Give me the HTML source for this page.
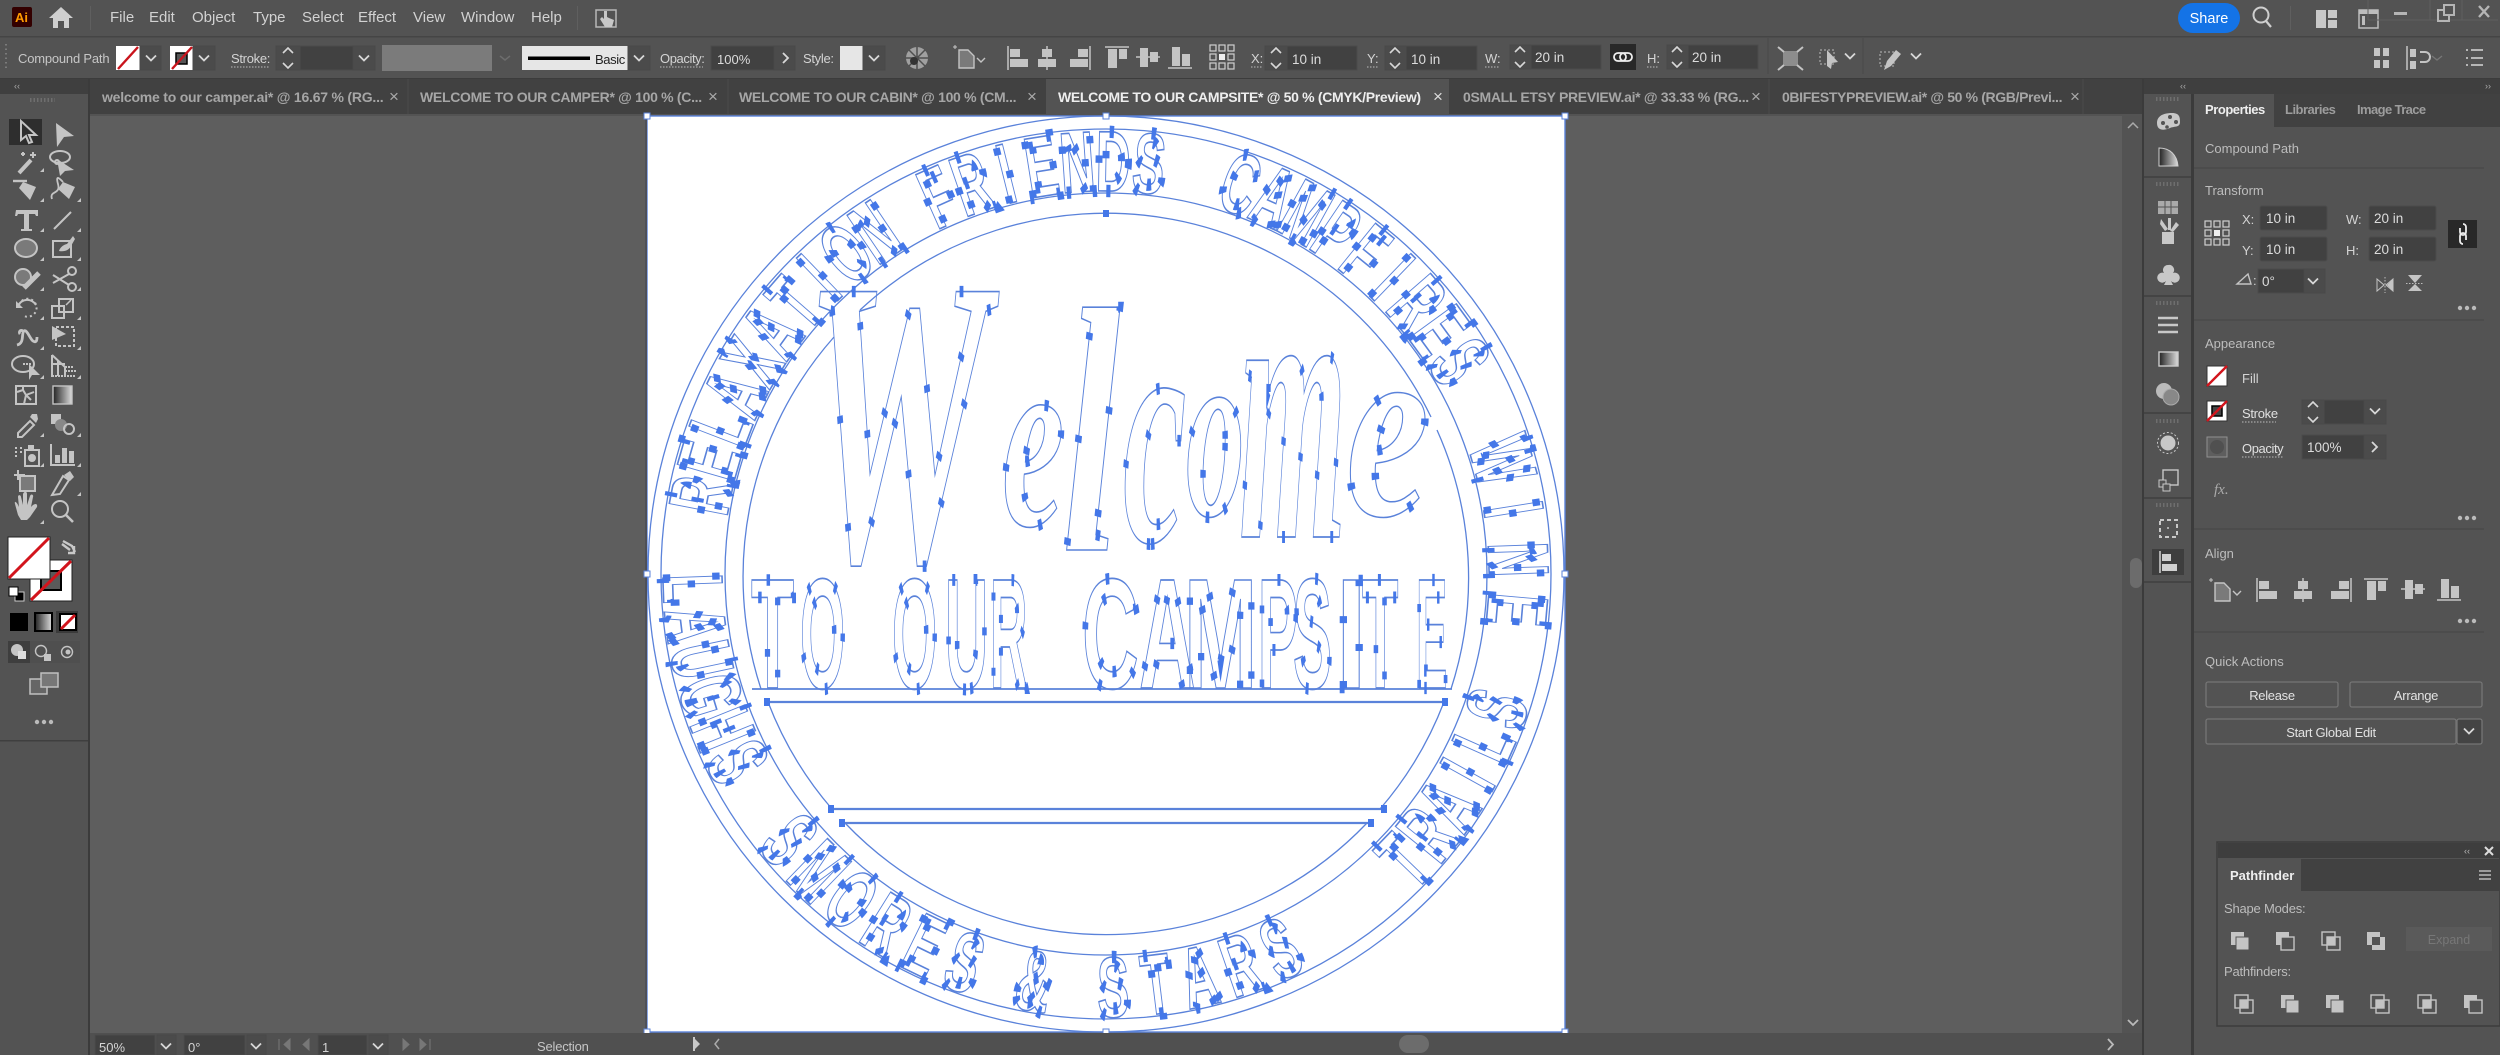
<!DOCTYPE html>
<html lang="en"><head><meta charset="utf-8"><title>Welcome to our campsite</title>
<style>
html,body{margin:0;padding:0;background:#535353;width:2500px;height:1055px;overflow:hidden}
svg{display:block;font-family:"Liberation Sans",sans-serif}
.m{font-size:15px;fill:#d2d2d2}
.t{font-size:13px;fill:#d4d4d4}
.tb{font-size:14px;font-weight:bold;fill:#a6a6a6}
.v{font-size:13.5px;fill:#dcdcdc}
.h{font-size:13px;fill:#bdbdbd}
.f{fill:#414141;stroke:#4b4b4b}
.s{fill:#4b4b4b;stroke:#484848}
.c{fill:none;stroke:#d0d0d0;stroke-width:1.6}
.ic{fill:#c4c4c4}
.il{fill:none;stroke:#c4c4c4;stroke-width:2}
.ln{fill:none;stroke:#5a82da;stroke-width:1.3}
.lt text{font-size:86px;font-weight:bold;text-anchor:middle;vector-effect:non-scaling-stroke}
.pt{fill:none;stroke:#4477e8;stroke-width:10;stroke-dasharray:6 34}
.art.pt{stroke-width:9;stroke-dasharray:6 80}
.art.pt g{stroke-dasharray:6 50}
.o{fill:none;stroke:#5a82da;stroke-width:1.3}
.art text{vector-effect:non-scaling-stroke;font-weight:bold}
.art .b{font-family:"Liberation Serif",serif;font-style:italic}
.hd{fill:#fff;stroke:#5a82da;stroke-width:1}
.x{font-size:17px;fill:#aaa}
</style></head><body>
<svg width="2500" height="1055" viewBox="0 0 2500 1055" xmlns="http://www.w3.org/2000/svg">
<defs>
<linearGradient id="gr" x1="0" x2="1" y1="0" y2="0"><stop offset="0" stop-color="#222"/><stop offset="1" stop-color="#ddd"/></linearGradient>
<g id="tri"><path d="M4 0L4 -4L0 0Z" fill="#c4c4c4"/></g>
<g id="al1"><path d="M1 0v24" stroke="#c4c4c4" stroke-width="1.5"/><rect class="ic" x="3" y="3" width="10" height="8"/><rect class="ic" x="3" y="13" width="18" height="8"/></g>
<g id="al2"><path d="M11 0v24" stroke="#c4c4c4" stroke-width="1.5"/><rect class="ic" x="6" y="3" width="10" height="8"/><rect class="ic" x="2" y="13" width="18" height="8"/></g>
<g id="al3"><path d="M21 0v24" stroke="#c4c4c4" stroke-width="1.5"/><rect class="ic" x="9" y="3" width="10" height="8"/><rect class="ic" x="1" y="13" width="18" height="8"/></g>
<g id="al4"><path d="M0 1h24" stroke="#c4c4c4" stroke-width="1.5"/><rect class="ic" x="3" y="3" width="9" height="19"/><rect class="ic" x="14" y="3" width="8" height="10"/></g>
<g id="al5"><path d="M0 11h24" stroke="#c4c4c4" stroke-width="1.5"/><rect class="ic" x="4" y="2" width="8" height="19"/><rect class="ic" x="14" y="6" width="8" height="10"/></g>
<g id="al6"><path d="M0 22h24" stroke="#c4c4c4" stroke-width="1.5"/><rect class="ic" x="4" y="1" width="8" height="19"/><rect class="ic" x="14" y="8" width="8" height="12"/></g>
<g id="docic"><path d="M6 5h9l6 6v12H6z" fill="#7a7a7a" stroke="#c4c4c4" stroke-width="1.4"/><path d="M0 2h4M2 0v4" stroke="#c4c4c4"/><path d="M24 13l4 4 4-4" fill="none" stroke="#c4c4c4" stroke-width="1.4"/></g>
<g id="refp"><g fill="none" stroke="#cfcfcf" stroke-width="1.2"><rect x="0" y="0" width="6" height="6"/><rect x="9" y="0" width="6" height="6"/><rect x="18" y="0" width="6" height="6"/><rect x="0" y="9" width="6" height="6"/><rect x="18" y="9" width="6" height="6"/><rect x="0" y="18" width="6" height="6"/><rect x="9" y="18" width="6" height="6"/><rect x="18" y="18" width="6" height="6"/></g><rect x="9" y="9" width="6" height="6" fill="#eee"/></g>
<path id="chev" d="M-5 -2.500L0 2.500L5 -2.500" fill="none" stroke="#d8d8d8" stroke-width="1.8"/>
<g id="spin"><path d="M-5 -5L0 -10L5 -5M-5 5L0 10L5 5" fill="none" stroke="#d8d8d8" stroke-width="1.6"/></g>
<g id="dots"><circle cx="2" cy="0" r="2.200" fill="#bbb"/><circle cx="9" cy="0" r="2.200" fill="#bbb"/><circle cx="16" cy="0" r="2.200" fill="#bbb"/></g>
<g id="swn"><rect width="20" height="20" fill="#fff" stroke="#333"/><path d="M0 20L20 0" stroke="#d2141c" stroke-width="2.400"/></g>
<g id="swnk"><rect width="20" height="20" fill="#fff" stroke="#333"/><rect x="5" y="5" width="10" height="10" fill="#444" stroke="#000" stroke-width="1.500"/><path d="M0 20L20 0" stroke="#d2141c" stroke-width="2.400"/></g>
<g id="pf1"><rect class="ic" x="0" y="0" width="13" height="13"/><rect class="ic" x="5" y="5" width="13" height="13" stroke="#535353"/></g>
<g id="pf2"><rect class="ic" x="0" y="0" width="13" height="13"/><rect x="5" y="5" width="13" height="13" fill="#535353" stroke="#c4c4c4" stroke-width="1.400"/></g>
<g id="pf3"><rect x="0" y="0" width="13" height="13" fill="none" stroke="#c4c4c4" stroke-width="1.400"/><rect x="5" y="5" width="13" height="13" fill="none" stroke="#c4c4c4" stroke-width="1.400"/><rect class="ic" x="5" y="5" width="8" height="8"/></g>
<g id="pf4"><rect class="ic" x="0" y="0" width="13" height="13"/><rect class="ic" x="5" y="5" width="13" height="13"/><rect x="5" y="5" width="8" height="8" fill="#535353"/></g>
</defs>

<!-- base -->
<rect width="2500" height="1055" fill="#535353"/>
<rect x="0" y="36" width="2500" height="1.500" fill="#454545"/>
<rect x="0" y="78" width="2500" height="1.500" fill="#3c3c3c"/>
<rect x="90" y="114" width="2032" height="919" fill="#5e5e5e"/>
<rect x="90" y="79" width="2053" height="35" fill="#414141"/>
<rect x="0" y="79" width="88" height="15" fill="#3f3f3f"/>
<rect x="2143" y="79" width="357" height="15" fill="#3f3f3f"/>
<rect x="88" y="79" width="2" height="976" fill="#3b3b3b"/>
<rect x="2142" y="79" width="2" height="976" fill="#3b3b3b"/>
<rect x="2191" y="94" width="3" height="961" fill="#3b3b3b"/>
<rect x="2194" y="94" width="306" height="33" fill="#414141"/>
<rect x="2194" y="94" width="80" height="33" fill="#535353"/>
<rect x="0" y="740" width="88" height="1.500" fill="#3f3f3f"/>

<!-- menu bar -->
<rect x="12" y="7" width="20" height="20" rx="2" fill="#330000"/>
<text x="15" y="22" style="font-size:13px;font-weight:bold;fill:#ff9a00">Ai</text>
<path d="M61 7L49 18h4v10h5v-7h6v7h5V18h4z" fill="#cfcfcf"/>
<rect x="90" y="6" width="1" height="24" fill="#5f5f5f"/>
<text class="m" x="110" y="22">File</text><text class="m" x="149" y="22">Edit</text><text class="m" x="192" y="22">Object</text><text class="m" x="253" y="22">Type</text><text class="m" x="302" y="22">Select</text><text class="m" x="358" y="22">Effect</text><text class="m" x="413" y="22">View</text><text class="m" x="461" y="22">Window</text><text class="m" x="531" y="22">Help</text>
<rect x="577" y="6" width="1" height="24" fill="#5f5f5f"/>
<rect x="596" y="10" width="20" height="17" fill="none" stroke="#b8b8b8" stroke-width="1.500"/>
<path d="M604 11v8l-2-2-2 2 5 8h7l2-7-5-2-2-1v-6z" fill="#c8c8c8"/>
<rect x="2178" y="3" width="62" height="30" rx="15" fill="#1473e6"/>
<text x="2209" y="23" text-anchor="middle" style="font-size:14.500px;fill:#fff">Share</text>
<circle cx="2261" cy="15" r="7.500" fill="none" stroke="#cfcfcf" stroke-width="2"/><path d="M2266 21l5 6" stroke="#cfcfcf" stroke-width="2.200"/>
<rect x="2290" y="6" width="1" height="24" fill="#5f5f5f"/>
<path d="M2316 10h10v18h-10zM2328 10h9v8h-9zM2328 20h9v8h-9z" fill="#c8c8c8"/>
<rect x="2359" y="10" width="19" height="18" fill="none" stroke="#bdbdbd" stroke-width="1.500"/><rect x="2359" y="10" width="19" height="4" fill="#bdbdbd"/><rect x="2362" y="16" width="3" height="9" fill="#bdbdbd"/>
<path d="M2368 0v20M2430 0v20M2462 0v20M2368 20h130" stroke="#5f5f5f" fill="none"/>
<rect x="2394" y="12" width="13" height="3" fill="#b5b5b5"/>
<rect x="2438" y="10" width="11" height="11" fill="none" stroke="#b5b5b5" stroke-width="2"/><rect x="2444" y="5" width="10" height="10" fill="#535353" stroke="#b5b5b5" stroke-width="2"/>
<path d="M2479 6l10 11M2489 6l-10 11" stroke="#b5b5b5" stroke-width="2.400"/>

<!-- control bar -->
<path d="M6 44v26" stroke="#7b7b7b" stroke-dasharray="1.500 3" stroke-width="2"/>
<text class="t" x="18" y="63" style="letter-spacing:-.2px;fill:#c6c6c6">Compound Path</text>
<rect x="116" y="46" width="24" height="24" fill="#fff"/><path d="M118 69L138 47" stroke="#c9141c" stroke-width="2.400"/>
<rect x="140" y="46" width="21" height="24" class="s"/><use href="#chev" x="151" y="58"/>
<rect x="170" y="46" width="23" height="24" fill="#fff"/><rect x="176" y="53" width="11" height="11" fill="#555" stroke="#000" stroke-width="1.500"/><path d="M172 69L192 47" stroke="#c9141c" stroke-width="2.400"/>
<rect x="193" y="46" width="22" height="24" class="s"/><use href="#chev" x="204" y="58"/>
<text class="t" x="231" y="63" style="letter-spacing:-.3px">Stroke:</text><path d="M231 67h38" stroke="#bbb" stroke-dasharray="1.500 1.500"/>
<rect x="276" y="46" width="24" height="24" class="s"/><use href="#spin" x="288" y="58"/>
<rect x="300" y="46" width="53" height="24" class="f"/>
<rect x="353" y="46" width="22" height="24" class="s"/><use href="#chev" x="364" y="58"/>
<rect x="382" y="45" width="110" height="26" fill="#7b7b7b"/>
<path d="M500 56l5 4 5-4" fill="none" stroke="#6d6d6d" stroke-width="1.500"/>
<rect x="522" y="46" width="106" height="24" fill="#e6e6e6"/><rect x="528" y="56.500" width="62" height="3.500" fill="#000"/>
<text x="595" y="64" style="font-size:13px;fill:#222;letter-spacing:-.4px">Basic</text>
<rect x="628" y="46" width="22" height="24" class="s"/><use href="#chev" x="639" y="58"/>
<text class="t" x="660" y="63" style="letter-spacing:-.4px">Opacity:</text><path d="M660 67h43" stroke="#bbb" stroke-dasharray="1.500 1.500"/>
<rect x="711" y="46" width="63" height="24" class="f"/><text class="v" x="717" y="64" style="font-size:13px">100%</text>
<rect x="774" y="46" width="21" height="24" class="s"/><path d="M783 53l5 5-5 5" fill="none" stroke="#d8d8d8" stroke-width="1.800"/>
<text class="t" x="803" y="63" style="letter-spacing:-.3px">Style:</text>
<rect x="840" y="46" width="23" height="24" fill="#e6e6e6"/>
<rect x="863" y="46" width="22" height="24" class="s"/><use href="#chev" x="874" y="58"/>
<circle cx="917" cy="58" r="11" fill="#a0a0a0"/><path d="M917 47v22M906 58h22M909 50l16 16M925 50l-16 16" stroke="#4f4f4f" stroke-width="1.500"/><circle cx="914" cy="61" r="4" fill="#333"/>
<use href="#docic" x="953" y="45"/>
<use href="#al1" x="1007" y="46"/><use href="#al2" x="1036" y="46"/><use href="#al3" x="1069" y="46"/><use href="#al4" x="1105" y="46"/><use href="#al5" x="1136" y="46"/><use href="#al6" x="1168" y="46"/>
<use href="#refp" x="1210" y="45"/>
<text class="t" x="1251" y="63">X:</text><path d="M1251 67h12" stroke="#bbb" stroke-dasharray="1.500 1.500"/>
<rect x="1265" y="46" width="22" height="24" class="s"/><use href="#spin" x="1276" y="58"/><rect x="1287" y="46" width="70" height="24" class="f"/><text class="v" x="1292" y="64">10 in</text>
<text class="t" x="1367" y="63">Y:</text><path d="M1367 67h12" stroke="#bbb" stroke-dasharray="1.500 1.500"/>
<rect x="1385" y="46" width="21" height="24" class="s"/><use href="#spin" x="1395" y="58"/><rect x="1406" y="46" width="71" height="24" class="f"/><text class="v" x="1411" y="64">10 in</text>
<text class="t" x="1485" y="63">W:</text><path d="M1485 67h15" stroke="#bbb" stroke-dasharray="1.500 1.500"/>
<rect x="1510" y="45" width="21" height="24" class="s"/><use href="#spin" x="1520" y="57"/><rect x="1531" y="45" width="70" height="24" class="f"/><text class="v" x="1535" y="62">20 in</text>
<rect x="1610" y="44" width="26" height="26" fill="#282828"/><path d="M1618 53h4a4 4 0 0 1 0 8h-4a4 4 0 0 1 0-8zM1624 53h4a4 4 0 0 1 0 8h-4a4 4 0 0 1 0-8z" fill="none" stroke="#eee" stroke-width="1.800"/>
<text class="t" x="1647" y="63">H:</text><path d="M1647 67h12" stroke="#bbb" stroke-dasharray="1.500 1.500"/>
<rect x="1667" y="45" width="21" height="24" class="s"/><use href="#spin" x="1677" y="57"/><rect x="1688" y="45" width="70" height="24" class="f"/><text class="v" x="1692" y="62">20 in</text>
<path d="M1768 38v36M1863 38v36" stroke="#4a4a4a"/>
<rect x="1783" y="51" width="15" height="15" fill="#8d8d8d"/><path d="M1778 47l6 5M1803 47l-6 5M1778 70l6-5M1803 70l-6-5" stroke="#c4c4c4" stroke-width="2"/>
<rect x="1820" y="50" width="14" height="14" fill="none" stroke="#bbb" stroke-dasharray="2 2"/><path d="M1827 50l11 12-6 1-1 6-4-3z" fill="#c4c4c4"/><use href="#chev" x="1850" y="56"/>
<rect x="1880" y="52" width="14" height="14" fill="none" stroke="#bbb" stroke-dasharray="2 2"/><path d="M1884 70l3-9 9-11 5 4-10 12z" fill="#c4c4c4"/><use href="#chev" x="1916" y="56"/>
<path d="M2374 48h6v8h-6zM2383 48h6v8h-6zM2374 60h6v8h-6zM2383 60h6v8h-6z" fill="#c4c4c4"/>
<path d="M2407 46v24" stroke="#c4c4c4" stroke-width="1.500"/><path d="M2410 49h6v8h-6zM2410 61h6v8h-6z" fill="#c4c4c4"/><path d="M2420 52h5a5 5 0 0 1 0 10h-5" fill="none" stroke="#c4c4c4" stroke-width="2"/>
<path d="M2432 56l5 4 5-4" fill="none" stroke="#767676" stroke-width="1.400"/>
<path d="M2466 50h2M2471 50h12M2466 58h2M2471 58h12M2466 65h2M2471 65h12" stroke="#c4c4c4" stroke-width="1.800" fill="none"/>

<!-- tabs -->
<path d="M408 79v35M728 79v35M1769 79v35M2083 79v35" stroke="#4a4a4a"/>
<rect x="1046" y="79" width="403" height="35" fill="#535353"/>
<rect x="90" y="114" width="2032" height="2" fill="#535353"/>
<text x="14" y="89" style="font-size:9px;fill:#aaa">‹‹</text>
<text class="tb" x="102" y="102" style="letter-spacing:-.22px">welcome to our camper.ai* @ 16.67 % (RG...</text><text class="x" x="389" y="102">×</text>
<text class="tb" x="420" y="102" style="letter-spacing:-.3px">WELCOME TO OUR CAMPER* @ 100 % (C...</text><text class="x" x="708" y="102">×</text>
<text class="tb" x="739" y="102" style="letter-spacing:-.3px">WELCOME TO OUR CABIN* @ 100 % (CM...</text><text class="x" x="1027" y="102">×</text>
<text class="tb" x="1058" y="102" style="fill:#eee;letter-spacing:-.32px">WELCOME TO OUR CAMPSITE* @ 50 % (CMYK/Preview)</text><text class="x" x="1433" y="102" style="fill:#ddd">×</text>
<text class="tb" x="1463" y="102" style="letter-spacing:-.32px">0SMALL ETSY PREVIEW.ai* @ 33.33 % (RG...</text><text class="x" x="1751" y="102">×</text>
<text class="tb" x="1782" y="102" style="letter-spacing:-.36px">0BIFESTYPREVIEW.ai* @ 50 % (RGB/Previ...</text><text class="x" x="2070" y="102">×</text>

<!-- artboard + artwork -->
<rect x="647" y="116" width="918" height="916" fill="#fff" stroke="#5a82da" stroke-width="1.400"/>
<rect x="645" y="116" width="2" height="916" fill="#4e5058"/>
<circle class="o" cx="1106" cy="574" r="458"/>
<circle class="o" cx="1106" cy="574" r="445"/>
<circle class="o" cx="1106" cy="574" r="381"/>
<g class="o">
<path d="M761 689A361 361 0 0 1 834 337"/><path d="M860 310A361 361 0 0 1 1431 417"/><path d="M1437 430A361 361 0 0 1 1451 689"/>
<path d="M768 702A361 361 0 0 0 832 809"/><path d="M1444 702A361 361 0 0 1 1380 809"/><path d="M845 823A361 361 0 0 0 1367 823"/>
<path d="M752 689H1452" stroke-width="1.800"/><path d="M767 702H1445" stroke-width="2.200"/><path d="M831 809H1383" stroke-width="2.200"/><path d="M842 823H1371" stroke-width="2.200"/>
</g>
<path d="M1103 210h6v7h-6zM764 698h6v8h-6zM1442 698h6v8h-6zM828 805h6v8h-6zM1381 805h6v8h-6zM839 819h6v8h-6zM1368 819h6v8h-6z" fill="#4477e8"/>

<!-- ring lettering: outline pass -->
<g transform="translate(1106 574)" class="lt ln">
<text transform="rotate(-79)translate(0,-383)scale(.56,1)">R</text><text transform="rotate(-74)translate(0,-383)scale(.56,1)">E</text><text transform="rotate(-69)translate(0,-383)scale(.56,1)">L</text><text transform="rotate(-64)translate(0,-383)scale(.56,1)">A</text><text transform="rotate(-59)translate(0,-383)scale(.56,1)">X</text><text transform="rotate(-54)translate(0,-383)scale(.56,1)">A</text><text transform="rotate(-49)translate(0,-383)scale(.56,1)">T</text><text transform="rotate(-44)translate(0,-383)scale(.56,1)">I</text><text transform="rotate(-39)translate(0,-383)scale(.56,1)">O</text><text transform="rotate(-34)translate(0,-383)scale(.56,1)">N</text>
<text transform="rotate(-24)translate(0,-383)scale(.56,1)">F</text><text transform="rotate(-19)translate(0,-383)scale(.56,1)">R</text><text transform="rotate(-14)translate(0,-383)scale(.56,1)">I</text><text transform="rotate(-9)translate(0,-383)scale(.56,1)">E</text><text transform="rotate(-4)translate(0,-383)scale(.56,1)">N</text><text transform="rotate(1)translate(0,-383)scale(.56,1)">D</text><text transform="rotate(6)translate(0,-383)scale(.56,1)">S</text>
<text transform="rotate(19)translate(0,-383)scale(.56,1)">C</text><text transform="rotate(24)translate(0,-383)scale(.56,1)">A</text><text transform="rotate(29)translate(0,-383)scale(.56,1)">M</text><text transform="rotate(34)translate(0,-383)scale(.56,1)">P</text><text transform="rotate(39)translate(0,-383)scale(.56,1)">F</text><text transform="rotate(44)translate(0,-383)scale(.56,1)">I</text><text transform="rotate(49)translate(0,-383)scale(.56,1)">R</text><text transform="rotate(54)translate(0,-383)scale(.56,1)">E</text><text transform="rotate(59)translate(0,-383)scale(.56,1)">S</text>
<text transform="rotate(74)translate(0,-383)scale(.56,1)">W</text><text transform="rotate(81)translate(0,-383)scale(.56,1)">I</text><text transform="rotate(88)translate(0,-383)scale(.56,1)">N</text><text transform="rotate(95)translate(0,-383)scale(.56,1)">E</text>
<text transform="rotate(88)translate(0,443)scale(.56,1)">L</text><text transform="rotate(83)translate(0,443)scale(.56,1)">A</text><text transform="rotate(78)translate(0,443)scale(.56,1)">U</text><text transform="rotate(73)translate(0,443)scale(.56,1)">G</text><text transform="rotate(68)translate(0,443)scale(.56,1)">H</text><text transform="rotate(63)translate(0,443)scale(.56,1)">S</text>
<text transform="rotate(50)translate(0,443)scale(.56,1)">S</text><text transform="rotate(44)translate(0,443)scale(.56,1)">M</text><text transform="rotate(38)translate(0,443)scale(.56,1)">O</text><text transform="rotate(32)translate(0,443)scale(.56,1)">R</text><text transform="rotate(26)translate(0,443)scale(.56,1)">E</text><text transform="rotate(20)translate(0,443)scale(.56,1)">S</text>
<text transform="rotate(10)translate(0,443)scale(.56,1)">&amp;</text>
<text transform="rotate(-1)translate(0,443)scale(.56,1)">S</text><text transform="rotate(-7)translate(0,443)scale(.56,1)">T</text><text transform="rotate(-13)translate(0,443)scale(.56,1)">A</text><text transform="rotate(-19)translate(0,443)scale(.56,1)">R</text><text transform="rotate(-25)translate(0,443)scale(.56,1)">S</text>
<text transform="rotate(-46)translate(0,443)scale(.56,1)">T</text><text transform="rotate(-51)translate(0,443)scale(.56,1)">R</text><text transform="rotate(-56)translate(0,443)scale(.56,1)">A</text><text transform="rotate(-61)translate(0,443)scale(.56,1)">I</text><text transform="rotate(-66)translate(0,443)scale(.56,1)">L</text><text transform="rotate(-71)translate(0,443)scale(.56,1)">S</text>
</g>
<!-- ring lettering: anchor point pass -->
<g transform="translate(1106 574)" class="lt pt" aria-hidden="true">
<text transform="rotate(-79)translate(0,-383)scale(.56,1)">R</text><text transform="rotate(-74)translate(0,-383)scale(.56,1)">E</text><text transform="rotate(-69)translate(0,-383)scale(.56,1)">L</text><text transform="rotate(-64)translate(0,-383)scale(.56,1)">A</text><text transform="rotate(-59)translate(0,-383)scale(.56,1)">X</text><text transform="rotate(-54)translate(0,-383)scale(.56,1)">A</text><text transform="rotate(-49)translate(0,-383)scale(.56,1)">T</text><text transform="rotate(-44)translate(0,-383)scale(.56,1)">I</text><text transform="rotate(-39)translate(0,-383)scale(.56,1)">O</text><text transform="rotate(-34)translate(0,-383)scale(.56,1)">N</text>
<text transform="rotate(-24)translate(0,-383)scale(.56,1)">F</text><text transform="rotate(-19)translate(0,-383)scale(.56,1)">R</text><text transform="rotate(-14)translate(0,-383)scale(.56,1)">I</text><text transform="rotate(-9)translate(0,-383)scale(.56,1)">E</text><text transform="rotate(-4)translate(0,-383)scale(.56,1)">N</text><text transform="rotate(1)translate(0,-383)scale(.56,1)">D</text><text transform="rotate(6)translate(0,-383)scale(.56,1)">S</text>
<text transform="rotate(19)translate(0,-383)scale(.56,1)">C</text><text transform="rotate(24)translate(0,-383)scale(.56,1)">A</text><text transform="rotate(29)translate(0,-383)scale(.56,1)">M</text><text transform="rotate(34)translate(0,-383)scale(.56,1)">P</text><text transform="rotate(39)translate(0,-383)scale(.56,1)">F</text><text transform="rotate(44)translate(0,-383)scale(.56,1)">I</text><text transform="rotate(49)translate(0,-383)scale(.56,1)">R</text><text transform="rotate(54)translate(0,-383)scale(.56,1)">E</text><text transform="rotate(59)translate(0,-383)scale(.56,1)">S</text>
<text transform="rotate(74)translate(0,-383)scale(.56,1)">W</text><text transform="rotate(81)translate(0,-383)scale(.56,1)">I</text><text transform="rotate(88)translate(0,-383)scale(.56,1)">N</text><text transform="rotate(95)translate(0,-383)scale(.56,1)">E</text>
<text transform="rotate(88)translate(0,443)scale(.56,1)">L</text><text transform="rotate(83)translate(0,443)scale(.56,1)">A</text><text transform="rotate(78)translate(0,443)scale(.56,1)">U</text><text transform="rotate(73)translate(0,443)scale(.56,1)">G</text><text transform="rotate(68)translate(0,443)scale(.56,1)">H</text><text transform="rotate(63)translate(0,443)scale(.56,1)">S</text>
<text transform="rotate(50)translate(0,443)scale(.56,1)">S</text><text transform="rotate(44)translate(0,443)scale(.56,1)">M</text><text transform="rotate(38)translate(0,443)scale(.56,1)">O</text><text transform="rotate(32)translate(0,443)scale(.56,1)">R</text><text transform="rotate(26)translate(0,443)scale(.56,1)">E</text><text transform="rotate(20)translate(0,443)scale(.56,1)">S</text>
<text transform="rotate(10)translate(0,443)scale(.56,1)">&amp;</text>
<text transform="rotate(-1)translate(0,443)scale(.56,1)">S</text><text transform="rotate(-7)translate(0,443)scale(.56,1)">T</text><text transform="rotate(-13)translate(0,443)scale(.56,1)">A</text><text transform="rotate(-19)translate(0,443)scale(.56,1)">R</text><text transform="rotate(-25)translate(0,443)scale(.56,1)">S</text>
<text transform="rotate(-46)translate(0,443)scale(.56,1)">T</text><text transform="rotate(-51)translate(0,443)scale(.56,1)">R</text><text transform="rotate(-56)translate(0,443)scale(.56,1)">A</text><text transform="rotate(-61)translate(0,443)scale(.56,1)">I</text><text transform="rotate(-66)translate(0,443)scale(.56,1)">L</text><text transform="rotate(-71)translate(0,443)scale(.56,1)">S</text>
</g>

<!-- Welcome / TO OUR CAMPSITE outlines -->
<g class="art ln">
<text class="b" transform="translate(805 560)scale(.5,1)" font-size="410">W</text>
<text class="b" transform="translate(1002 525)scale(.55,1)" font-size="255">e</text>
<text class="b" transform="translate(1062 550)scale(.6,1)" font-size="350">l</text>
<text class="b" transform="translate(1123 541)scale(.44,1)" font-size="325">c</text>
<text class="b" transform="translate(1186 515)scale(.47,1)" font-size="250">o</text>
<text class="b" transform="translate(1239 537)scale(.36,1)" font-size="385">m</text>
<text class="b" transform="translate(1346 515)scale(.72,1)" font-size="260">e</text>
<g font-size="157">
<text transform="translate(751 688)scale(.45,1)">T</text><text transform="translate(800 688)scale(.37,1)">O</text>
<text transform="translate(892 688)scale(.37,1)">O</text><text transform="translate(945 688)scale(.38,1)">U</text><text transform="translate(990 688)scale(.33,1)">R</text>
<text transform="translate(1082 688)scale(.5,1)">C</text><text transform="translate(1139 688)scale(.5,1)">A</text><text transform="translate(1184 688)scale(.56,1)">M</text><text transform="translate(1258 688)scale(.38,1)">P</text><text transform="translate(1293 688)scale(.37,1)">S</text><text transform="translate(1336 688)scale(.7,1)">I</text><text transform="translate(1362 688)scale(.38,1)">T</text><text transform="translate(1416 688)scale(.3,1)">E</text>
</g>
</g>
<g class="art pt" aria-hidden="true">
<text class="b" transform="translate(805 560)scale(.5,1)" font-size="410">W</text>
<text class="b" transform="translate(1002 525)scale(.55,1)" font-size="255">e</text>
<text class="b" transform="translate(1062 550)scale(.6,1)" font-size="350">l</text>
<text class="b" transform="translate(1123 541)scale(.44,1)" font-size="325">c</text>
<text class="b" transform="translate(1186 515)scale(.47,1)" font-size="250">o</text>
<text class="b" transform="translate(1239 537)scale(.36,1)" font-size="385">m</text>
<text class="b" transform="translate(1346 515)scale(.72,1)" font-size="260">e</text>
<g font-size="157">
<text transform="translate(751 688)scale(.45,1)">T</text><text transform="translate(800 688)scale(.37,1)">O</text>
<text transform="translate(892 688)scale(.37,1)">O</text><text transform="translate(945 688)scale(.38,1)">U</text><text transform="translate(990 688)scale(.33,1)">R</text>
<text transform="translate(1082 688)scale(.5,1)">C</text><text transform="translate(1139 688)scale(.5,1)">A</text><text transform="translate(1184 688)scale(.56,1)">M</text><text transform="translate(1258 688)scale(.38,1)">P</text><text transform="translate(1293 688)scale(.37,1)">S</text><text transform="translate(1336 688)scale(.7,1)">I</text><text transform="translate(1362 688)scale(.38,1)">T</text><text transform="translate(1416 688)scale(.3,1)">E</text>
</g>
</g>
<g class="hd"><rect x="644" y="113" width="6" height="6"/><rect x="1103" y="113" width="6" height="6"/><rect x="1562" y="113" width="6" height="6"/><rect x="644" y="571" width="6" height="6"/><rect x="1562" y="571" width="6" height="6"/><rect x="644" y="1029" width="6" height="6"/><rect x="1103" y="1029" width="6" height="6"/><rect x="1562" y="1029" width="6" height="6"/></g>

<!-- vertical scrollbar -->
<rect x="2122" y="114" width="20" height="919" fill="#535353"/>
<path d="M2128 128l5-5 5 5" fill="none" stroke="#aaa" stroke-width="1.500"/>
<rect x="2130" y="558" width="12" height="30" rx="6" fill="#6c6c6c"/>
<path d="M2128 1020l5 5 5-5" fill="none" stroke="#bbb" stroke-width="1.800"/>

<!-- status bar -->
<rect x="90" y="1033" width="2052" height="22" fill="#505050"/>
<rect x="95" y="1035" width="60" height="20" class="f"/><text class="t" x="99" y="1052">50%</text><rect x="157" y="1035" width="19" height="20" class="s"/><use href="#chev" x="166" y="1046"/>
<rect x="184" y="1035" width="61" height="20" class="f"/><text class="t" x="188" y="1052">0°</text><rect x="247" y="1035" width="19" height="20" class="s"/><use href="#chev" x="256" y="1046"/>
<path d="M279 1039v11M290 1039l-6 5.500 6 5.500zM309 1039l-6 5.500 6 5.500z" fill="#777" stroke="#777"/>
<rect x="318" y="1035" width="49" height="20" class="f"/><text class="t" x="322" y="1052">1</text><rect x="369" y="1035" width="19" height="20" class="s"/><use href="#chev" x="378" y="1046"/>
<path d="M403 1039l6 5.500-6 5.500zM420 1039l6 5.500-6 5.500zM430 1039v11" fill="#777" stroke="#777"/>
<text class="t" x="537" y="1051" style="letter-spacing:-.2px;fill:#c6c6c6">Selection</text>
<path d="M693 1037l7 7-7 7z" fill="#c8c8c8"/><path d="M694 1037v14" stroke="#c8c8c8" stroke-width="2"/>
<path d="M719 1039l-4 5 4 5" fill="none" stroke="#aaa" stroke-width="1.500"/>
<rect x="1399" y="1035" width="30" height="18" rx="9" fill="#6c6c6c"/>
<path d="M2108 1039l5 5.500-5 5.500" fill="none" stroke="#bbb" stroke-width="1.800"/>

<!-- left toolbar -->
<path d="M30 100h25" stroke="#6e6e6e" stroke-dasharray="1.500 2" stroke-width="4"/>
<rect x="9" y="119" width="33" height="26" fill="#2e2e2e"/>
<g class="il">
<g transform="translate(27 133)"><path d="M-6-12V7L-1 3 2 10 5 9 2 2H9Z"/></g>
<g transform="translate(56 123)"><path d="M0 0L18 13 8 14 1 24Z" fill="#c4c4c4" stroke="none"/></g>
<g transform="translate(27 162)"><path d="M-8 11L4-2" stroke-width="4"/><path d="M6-10v6M3-7h6M-4-10v4M-6-8h4"/></g>
<g transform="translate(63 162)"><ellipse cx="-3" cy="-5" rx="10" ry="6"/><path d="M-6-3L11 8 2 9-3 14Z" fill="#c4c4c4" stroke="none"/><circle cx="-6" cy="0" r="2"/></g>
<g transform="translate(27 190)"><path d="M-14-9H0" stroke-width="2.400"/><path d="M-4-8L9-3 3 10-8-2Z" fill="#c4c4c4" stroke="none"/></g>
<g transform="translate(63 190)"><path d="M-11 9C-14 0-2 5-5-6S-2-10 0-8" stroke-width="1.800"/><path d="M0-8L12-3 6 9-5-1Z" fill="#c4c4c4" stroke="none"/></g>
<path d="M16 210h22v6h-2l-1-2h-6v15h3v2H21v-2h3V214h-6l-1 2h-2z" fill="#c4c4c4" stroke="none"/>
<path d="M54 229L71 212"/>
<ellipse cx="26" cy="248" rx="11" ry="9" fill="#7a7a7a"/>
<g transform="translate(63 248)"><path d="M-10-7H8V9H-10Z"/><path d="M-4 3C-2-3 4-4 4-4L10-12 12-9 8-2C6 2 2 4-4 3Z" fill="#c4c4c4" stroke="none"/></g>
<g transform="translate(27 280)"><circle cx="-4" cy="-3" r="8" fill="#7a7a7a"/><path d="M-3 8L12-7" stroke-width="5"/></g>
<g transform="translate(63 280)"><circle cx="9" cy="-9" r="4"/><circle cx="9" cy="7" r="4"/><path d="M-10-5L6 5M-10 3L6-6"/></g>
<g transform="translate(27 308)"><path d="M-8-3A9 9 0 1 1-3 8" stroke-dasharray="2 3"/><path d="M-9-2A10 10 0 0 1 9-3"/><path d="M-11-7V0H-4Z" fill="#c4c4c4" stroke="none"/></g>
<g transform="translate(63 308)"><rect x="-11" y="-2" width="12" height="12"/><rect x="-4" y="-9" width="14" height="13"/><path d="M3-3L8-8" stroke-width="1.500"/></g>
<g transform="translate(27 337)"><path d="M-10 8C-2 6-6-4-3-6S3 2 6 4 10 4 10 0M-4-6C-8-8-8-4-7-3" stroke-width="2.800"/></g>
<g transform="translate(63 337)"><path d="M-11-11L3-3-11 3Z" fill="#c4c4c4" stroke="none"/><rect x="-7" y="-10" width="18" height="19" stroke-dasharray="3 2"/></g>
<g transform="translate(27 367)"><ellipse cx="-4" cy="-3" rx="11" ry="8"/><path d="M-4-3h8" stroke-dasharray="2 1"/><path d="M2-3L13 8 5 8 2 13Z" fill="#c4c4c4" stroke="none"/></g>
<g transform="translate(63 367)"><path d="M-11-12V10M-11-12L2 0V8M-5-7V9M-11-3H2"/><path d="M2 0h8M2 4h12M-11 9H13" stroke-dasharray="2 1"/></g>
<g transform="translate(26 395)"><rect x="-10" y="-9" width="20" height="18"/><path d="M-9-3L-3-5 0 0 8-3M-3-5V-9M0 0L-2 9M0 0L5 5"/></g>
<rect x="53" y="386" width="19" height="18" fill="url(#gr)" stroke="#c4c4c4" stroke-width="1.400"/>
<g transform="translate(27 425)"><path d="M-9 8L3-4 7 0-5 12-9 12Z"/><path d="M3-8L9-2 11-6 10-11 5-11Z" fill="#c4c4c4" stroke="none"/></g>
<g transform="translate(63 425)"><rect x="-12" y="-11" width="10" height="10" fill="#c4c4c4" stroke="none"/><circle cx="-2" cy="0" r="6" fill="#888" stroke="none"/><circle cx="6" cy="4" r="5"/></g>
<g transform="translate(27 455)"><path d="M-12-7h2M-7-7h2M-12-3h2M-7-3h2M-12 1h2" stroke-width="2"/><rect x="-2" y="-5" width="14" height="16"/><rect x="1" y="-10" width="6" height="5" fill="#c4c4c4" stroke="none"/><circle cx="5" cy="3" r="3" fill="#c4c4c4"/></g>
<g transform="translate(63 455)"><path d="M-12-11V10H12"/><path d="M-8 0h5v8h-5zM-1-7h5V8H-1zM6-4h5V8H6z" fill="#c4c4c4" stroke="none"/></g>
<g transform="translate(27 483)"><path d="M-13-8H-2M-9-13V-3"/><rect x="-7" y="-7" width="15" height="15" fill="#7a7a7a"/></g>
<g transform="translate(63 483)"><path d="M-11 12L0-7 6-3-3 11Z"/><path d="M1-8L7-12 11-6 7-2Z" fill="#c4c4c4" stroke="none"/></g>
<path d="M18 515L15 504C14 500 17 502 19 507L18 497C18 494 21 495 21 497L23 505 23 494C24 491 27 491 27 494V505L30 496C31 493 34 495 33 497L31 507C34 503 38 503 37 507L30 517 27 520H21Z" fill="#c4c4c4" stroke="none"/>
<g transform="translate(61 510)"><circle cx="-1" cy="-1" r="8"/><path d="M5 5L12 12" stroke-width="2.600"/></g>
</g>
<g>
<use href="#tri" x="40" y="172"/><use href="#tri" x="40" y="202"/><use href="#tri" x="77" y="202"/><use href="#tri" x="40" y="232"/><use href="#tri" x="77" y="232"/><use href="#tri" x="40" y="261"/><use href="#tri" x="77" y="261"/><use href="#tri" x="40" y="291"/><use href="#tri" x="77" y="291"/><use href="#tri" x="40" y="320"/><use href="#tri" x="77" y="320"/><use href="#tri" x="40" y="350"/><use href="#tri" x="77" y="350"/><use href="#tri" x="40" y="379"/><use href="#tri" x="77" y="379"/><use href="#tri" x="40" y="437"/><use href="#tri" x="77" y="437"/><use href="#tri" x="40" y="467"/><use href="#tri" x="77" y="467"/><use href="#tri" x="77" y="496"/><use href="#tri" x="40" y="524"/>
</g>

<rect x="30" y="560" width="42" height="41" fill="#fff" stroke="#222"/>
<rect x="41" y="571" width="20" height="19" fill="#5a5a5a" stroke="#000" stroke-width="2"/>
<path d="M31 600L71 561" stroke="#d2141c" stroke-width="3"/>
<rect x="8" y="537" width="42" height="42" fill="#fff" stroke="#222"/>
<path d="M9 578L49 538" stroke="#d2141c" stroke-width="3"/>
<path d="M63 541L72 546 75 552M62 544L70 550M74 546V553H68" fill="none" stroke="#c8c8c8" stroke-width="2.400"/>
<rect x="15" y="592" width="9" height="9" fill="#000" stroke="#ccc"/><rect x="9" y="587" width="9" height="9" fill="#fff" stroke="#000"/>
<rect x="10" y="613" width="18" height="18" fill="#000"/>
<rect x="35" y="613" width="17" height="18" fill="url(#gr)" stroke="#000" stroke-width="2"/>
<rect x="56" y="611" width="22" height="22" fill="#3b3b3b"/>
<rect x="60" y="614" width="16" height="16" fill="#fff" stroke="#000" stroke-width="2"/><path d="M61 629L75 615" stroke="#d2141c" stroke-width="3"/>
<rect x="8" y="641" width="22" height="22" fill="#3e3e3e"/>
<rect x="30" y="641" width="50" height="22" fill="#4f4f4f"/>
<circle cx="17" cy="650" r="5.500" fill="#c4c4c4" stroke="#c4c4c4"/><rect x="18" y="651" width="8" height="8" fill="#ddd"/>
<circle cx="41" cy="651" r="5.500" fill="none" stroke="#c4c4c4" stroke-width="1.400"/><rect x="44" y="654" width="7" height="7" fill="#c4c4c4"/>
<circle cx="67" cy="652" r="5.500" fill="none" stroke="#c4c4c4" stroke-width="1.400"/><circle cx="68" cy="652" r="2.500" fill="#c4c4c4"/>
<rect x="30" y="679" width="17" height="15" fill="#666" stroke="#c0c0c0" stroke-width="1.500"/><rect x="41" y="673" width="17" height="14" fill="#777" stroke="#c0c0c0" stroke-width="1.500"/>
<use href="#dots" x="35" y="722"/>

<!-- right dock icon strip -->
<g fill="#777"><path d="M2156 99h24M2156 184h24M2156 303h24M2156 421h24M2156 505h24" stroke="#6e6e6e" stroke-width="4" stroke-dasharray="1.500 2" fill="none"/></g>
<path d="M2144 177h47M2144 296h47M2144 413h47M2144 498h47M2144 582h47" stroke="#3f3f3f" stroke-width="1.500"/>
<path d="M2157 123C2157 115 2165 113 2172 113 2180 113 2180 118 2180 122 2180 128 2174 126 2170 128 2166 130 2157 132 2157 123Z" fill="#c8c8c8"/><circle cx="2163" cy="123" r="2" fill="#535353"/><circle cx="2170" cy="117" r="2" fill="#535353"/><circle cx="2176" cy="122" r="2" fill="#535353"/><circle cx="2167" cy="127" r="1.800" fill="#535353"/>
<path d="M2159 148C2170 148 2177 155 2178 166H2159Z" fill="url(#gr)" stroke="#d0d0d0"/>
<rect x="2158" y="201" width="20" height="13" fill="#aaa"/><path d="M2158 207h20M2165 201v13M2171 201v13" stroke="#535353"/>
<path d="M2162 232h12v12h-12zM2165 231L2160 224 2161 219 2168 229ZM2168 230V218h3V230ZM2170 231L2176 222 2179 225 2173 232Z" fill="#c8c8c8"/>
<path d="M2168 265a5 5 0 0 1 5 8 5 5 0 1 1-2 8l2 4h-9l2-4a5 5 0 1 1-2-8 5 5 0 0 1 4-8z" fill="#c8c8c8"/>
<path d="M2158 318h20M2158 325h20M2158 332h20" stroke="#c8c8c8" stroke-width="2.600"/>
<rect x="2159" y="352" width="19" height="14" fill="url(#gr)" stroke="#ccc" stroke-width="1.400"/>
<circle cx="2164" cy="391" r="8" fill="#bbb"/><circle cx="2171" cy="397" r="8" fill="#888" stroke="#aaa"/>
<circle cx="2168" cy="443" r="7.500" fill="#c8c8c8"/><circle cx="2168" cy="443" r="10.500" fill="none" stroke="#c8c8c8" stroke-dasharray="2 2"/>
<rect x="2163" y="470" width="15" height="15" fill="none" stroke="#c8c8c8" stroke-width="1.400"/><rect x="2159" y="480" width="7" height="7" fill="#535353" stroke="#c8c8c8"/><rect x="2163" y="484" width="7" height="7" fill="#535353" stroke="#c8c8c8"/>
<rect x="2160" y="520" width="17" height="17" fill="none" stroke="#c8c8c8" stroke-width="2" stroke-dasharray="4 3"/><circle cx="2168" cy="528" r="1" fill="#c8c8c8"/>
<rect x="2152" y="549" width="32" height="26" fill="#3e3e3e"/>
<g transform="translate(2159 551)"><path d="M1 0v22" stroke="#d0d0d0" stroke-width="1.500"/><rect x="3" y="3" width="9" height="7" fill="#d0d0d0"/><rect x="3" y="13" width="15" height="7" fill="#d0d0d0"/></g>

<!-- properties panel -->
<text x="2205" y="114" style="font-size:13px;font-weight:bold;fill:#eee;letter-spacing:-.45px">Properties</text>
<text class="h" x="2285" y="114" style="font-weight:bold;fill:#9d9d9d;letter-spacing:-.5px">Libraries</text>
<text class="h" x="2357" y="114" style="font-weight:bold;fill:#9d9d9d;letter-spacing:-.6px">Image Trace</text>
<text x="2180" y="89" style="font-size:9px;fill:#aaa">‹‹</text><text x="2485" y="89" style="font-size:9px;fill:#aaa">››</text>
<text class="h" x="2205" y="153">Compound Path</text>
<path d="M2194 168h290M2194 320h290M2194 529h290M2194 632h290" stroke="#4a4a4a" stroke-width="1.500"/>
<text class="h" x="2205" y="195">Transform</text>
<use href="#refp" x="2205" y="221"/>
<text class="t" x="2242" y="224">X:</text><rect x="2260" y="206" width="67" height="24" rx="2" class="f"/><text class="v" x="2266" y="223">10 in</text>
<text class="t" x="2242" y="255">Y:</text><rect x="2260" y="237" width="67" height="24" rx="2" class="f"/><text class="v" x="2266" y="254">10 in</text>
<text class="t" x="2346" y="224">W:</text><rect x="2369" y="206" width="67" height="24" rx="2" class="f"/><text class="v" x="2374" y="223">20 in</text>
<text class="t" x="2346" y="255">H:</text><rect x="2369" y="237" width="67" height="24" rx="2" class="f"/><text class="v" x="2374" y="254">20 in</text>
<rect x="2448" y="220" width="29" height="28" fill="#282828"/><path d="M2463 224a3 3 0 0 1 3 3v5a3 3 0 0 1-6 0v-4M2463 244a3 3 0 0 1-3-3v-5a3 3 0 0 1 6 0v4" fill="none" stroke="#eee" stroke-width="1.800"/>
<path d="M2237 284L2248 274 2251 284ZM2243 279" fill="none" stroke="#c4c4c4" stroke-width="1.400"/><text class="t" x="2253" y="285">:</text>
<rect x="2258" y="269" width="46" height="24" class="f"/><text class="v" x="2262" y="286">0°</text><rect x="2304" y="269" width="21" height="24" class="s"/><use href="#chev" x="2313" y="281"/>
<path d="M2377 279l7 6-7 6zM2393 279l-7 6 7 6z" fill="none" stroke="#c4c4c4"/><path d="M2393 279l-6 6 6 6z" fill="#c4c4c4"/><path d="M2385 277v16" stroke="#bbb" stroke-dasharray="1.500 1.500"/>
<path d="M2408 275h14l-7 8zM2408 291h14l-7-7z" fill="#c4c4c4"/><path d="M2406 283.500h18" stroke="#bbb" stroke-dasharray="1.500 1.500"/>
<use href="#dots" x="2458" y="308"/>
<text class="h" x="2205" y="348">Appearance</text>
<use href="#swn" x="2207" y="366"/><text class="t" x="2242" y="383">Fill</text>
<use href="#swnk" x="2207" y="401"/><text class="t" x="2242" y="418" style="fill:#e0e0e0;letter-spacing:-.3px">Stroke</text><path d="M2242 422h34" stroke="#bbb" stroke-dasharray="1.500 1.500"/>
<rect x="2302" y="400" width="22" height="24" class="s"/><use href="#spin" x="2313" y="412"/><rect x="2324" y="400" width="40" height="24" class="f"/><rect x="2364" y="400" width="22" height="24" class="s"/><use href="#chev" x="2375" y="411"/>
<rect x="2207" y="437" width="20" height="20" fill="#5e5e5e" stroke="#909090"/><circle cx="2217" cy="447" r="7" fill="#505050"/>
<text class="t" x="2242" y="453" style="fill:#e0e0e0;letter-spacing:-.4px">Opacity</text><path d="M2242 457h41" stroke="#bbb" stroke-dasharray="1.500 1.500"/>
<rect x="2302" y="435" width="62" height="24" class="f"/><text class="v" x="2307" y="452">100%</text><rect x="2364" y="435" width="22" height="24" class="s"/><path d="M2372 442l5 5-5 5" fill="none" stroke="#d8d8d8" stroke-width="1.800"/>
<text x="2214" y="494" style="font-size:15px;font-style:italic;fill:#aaa;font-family:'Liberation Serif',serif">fx.</text>
<use href="#dots" x="2458" y="518"/>
<text class="h" x="2205" y="558">Align</text>
<use href="#docic" x="2209" y="578"/>
<use href="#al1" x="2256" y="578"/><use href="#al2" x="2292" y="578"/><use href="#al3" x="2330" y="578"/><use href="#al4" x="2364" y="578"/><use href="#al5" x="2401" y="578"/><use href="#al6" x="2437" y="578"/>
<use href="#dots" x="2458" y="621"/>
<text class="h" x="2205" y="666">Quick Actions</text>
<rect x="2206" y="682" width="132" height="25" rx="2" fill="none" stroke="#757575" stroke-width="1.300"/><text class="t" x="2272" y="700" text-anchor="middle" style="fill:#e2e2e2;letter-spacing:-.3px">Release</text>
<rect x="2350" y="682" width="132" height="25" rx="2" fill="none" stroke="#757575" stroke-width="1.300"/><text class="t" x="2416" y="700" text-anchor="middle" style="fill:#e2e2e2;letter-spacing:-.3px">Arrange</text>
<rect x="2206" y="719" width="250" height="25" rx="2" fill="none" stroke="#757575" stroke-width="1.300"/><text class="t" x="2331" y="737" text-anchor="middle" style="fill:#e2e2e2;letter-spacing:-.3px">Start Global Edit</text>
<rect x="2457" y="719" width="25" height="25" rx="2" fill="#444" stroke="#757575" stroke-width="1.300"/><use href="#chev" x="2469" y="731"/>

<!-- Pathfinder -->
<rect x="2217" y="842" width="283" height="184" fill="#535353" stroke="#3c3c3c" stroke-width="1.500"/>
<rect x="2218" y="843" width="282" height="15" fill="#3e3e3e"/>
<rect x="2218" y="859" width="282" height="32" fill="#414141"/>
<rect x="2218" y="859" width="83" height="32" fill="#535353"/>
<text x="2464" y="854" style="font-size:9px;fill:#bbb">‹‹</text>
<path d="M2485 847l8 8M2493 847l-8 8" stroke="#ddd" stroke-width="2"/>
<text x="2230" y="880" style="font-size:13px;font-weight:bold;fill:#eee">Pathfinder</text>
<path d="M2479 871h12M2479 875h12M2479 879h12" stroke="#bbb" stroke-width="1.500"/>
<text class="h" x="2224" y="913" style="letter-spacing:-.2px">Shape Modes:</text>
<use href="#pf1" x="2231" y="932"/><use href="#pf2" x="2276" y="932"/><use href="#pf3" x="2322" y="932"/><use href="#pf4" x="2367" y="932"/>
<rect x="2406" y="927" width="86" height="24" fill="#5a5a5a"/><text x="2449" y="944" text-anchor="middle" style="font-size:12.500px;fill:#777">Expand</text>
<text class="h" x="2224" y="976" style="letter-spacing:-.2px">Pathfinders:</text>
<use href="#pf3" x="2235" y="995"/><use href="#pf1" x="2281" y="995"/><use href="#pf1" x="2326" y="995"/><use href="#pf3" x="2371" y="995"/><use href="#pf3" x="2418" y="995"/><use href="#pf2" x="2464" y="995"/>
</svg>
</body></html>
